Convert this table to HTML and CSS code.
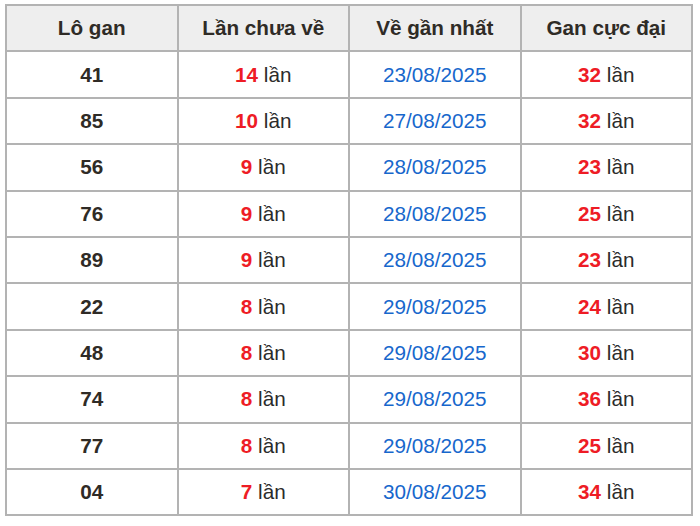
FILE: index.html
```html
<!DOCTYPE html>
<html lang="vi">
<head>
<meta charset="utf-8">
<title>Lô gan</title>
<link rel="stylesheet" href="styles.css">
</head>
<body>
<table class="gan">
<thead>
<tr><th>Lô gan</th><th>Lần chưa về</th><th>Về gần nhất</th><th>Gan cực đại</th></tr>
</thead>
<tbody>
<tr><td class="lo">41</td><td><b class="red">14</b> lần</td><td class="date">23/08/2025</td><td><b class="red">32</b> lần</td></tr>
<tr><td class="lo">85</td><td><b class="red">10</b> lần</td><td class="date">27/08/2025</td><td><b class="red">32</b> lần</td></tr>
<tr><td class="lo">56</td><td><b class="red">9</b> lần</td><td class="date">28/08/2025</td><td><b class="red">23</b> lần</td></tr>
<tr><td class="lo">76</td><td><b class="red">9</b> lần</td><td class="date">28/08/2025</td><td><b class="red">25</b> lần</td></tr>
<tr><td class="lo">89</td><td><b class="red">9</b> lần</td><td class="date">28/08/2025</td><td><b class="red">23</b> lần</td></tr>
<tr><td class="lo">22</td><td><b class="red">8</b> lần</td><td class="date">29/08/2025</td><td><b class="red">24</b> lần</td></tr>
<tr><td class="lo">48</td><td><b class="red">8</b> lần</td><td class="date">29/08/2025</td><td><b class="red">30</b> lần</td></tr>
<tr><td class="lo">74</td><td><b class="red">8</b> lần</td><td class="date">29/08/2025</td><td><b class="red">36</b> lần</td></tr>
<tr><td class="lo">77</td><td><b class="red">8</b> lần</td><td class="date">29/08/2025</td><td><b class="red">25</b> lần</td></tr>
<tr><td class="lo">04</td><td><b class="red">7</b> lần</td><td class="date">30/08/2025</td><td><b class="red">34</b> lần</td></tr>
</tbody>
</table>
</body>
</html>
```
FILE: styles.css
```css
html, body {
  margin: 0;
  padding: 0;
  background: #ffffff;
}
body {
  padding: 4px 0 0 5px;
  font-family: "Liberation Sans", Arial, sans-serif;
}
.gan {
  width: 688px;
  border-collapse: collapse;
  table-layout: fixed;
  border: 2px solid #b3b3b3;
  font-size: 20.7px;
  color: #2b2b2b;
}
.gan th,
.gan td {
  border: 2px solid #b3b3b3;
  text-align: center;
  padding: 0;
  height: 44.4px;
}
.gan th {
  background: #eeeeee;
  font-weight: bold;
  color: #2f2b26;
}
.gan .lo {
  font-weight: bold;
  color: #2f2b26;
}
.gan .red {
  color: #ee1c25;
  font-weight: bold;
}
.gan .date {
  color: #1767cc;
}
```
